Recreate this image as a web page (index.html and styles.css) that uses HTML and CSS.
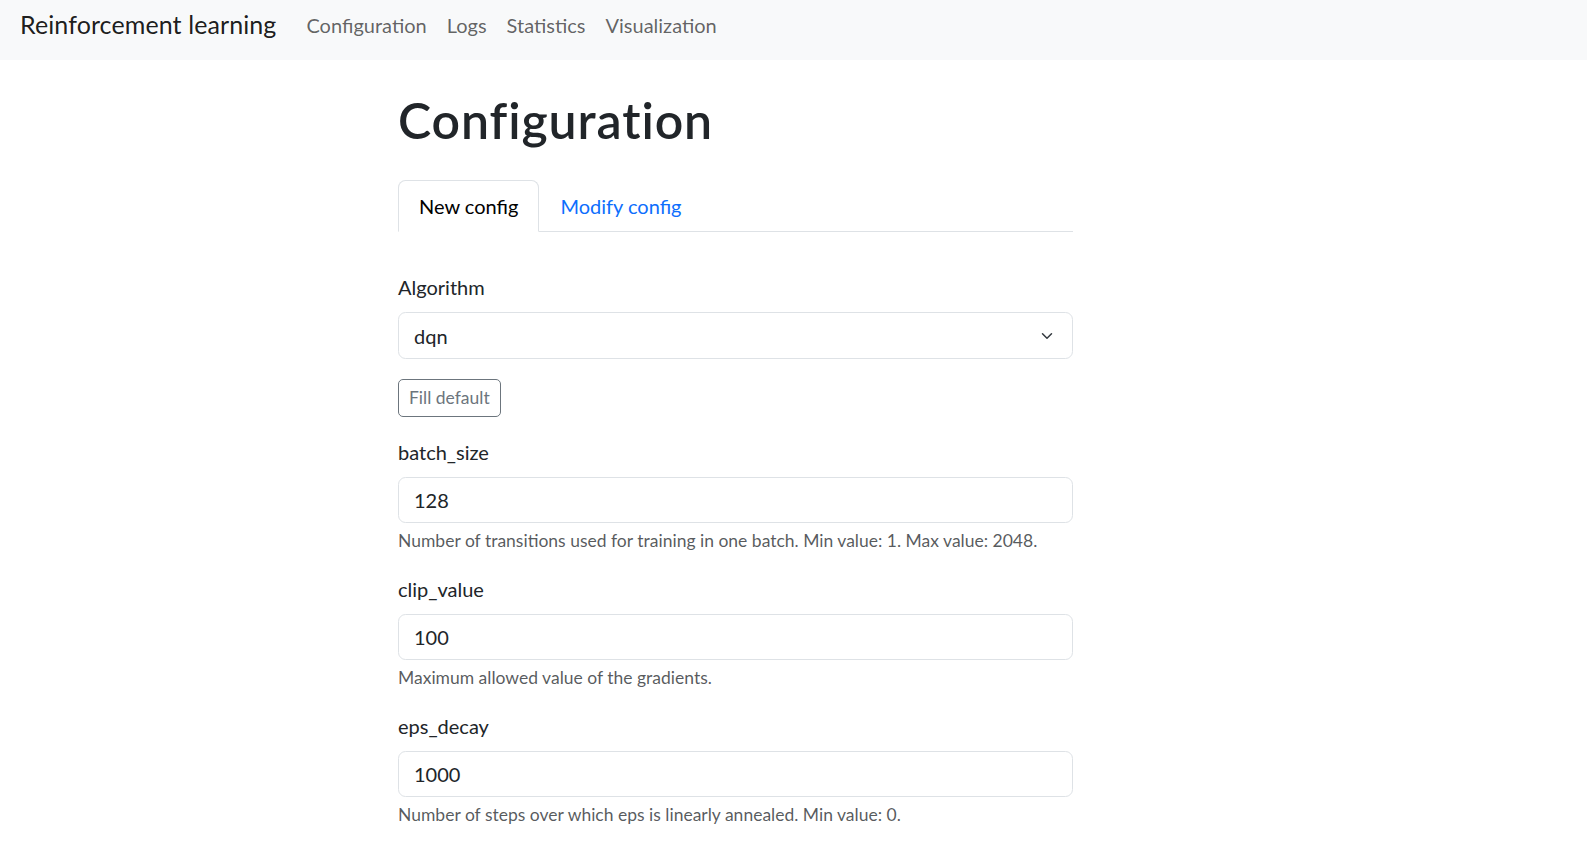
FILE: index.html
```html
<!DOCTYPE html>
<html lang="en">
<head>
<meta charset="utf-8">
<title>Reinforcement learning</title>
<link rel="stylesheet" href="styles.css">
</head>
<body>
<nav class="navbar">
  <a class="brand" href="#">Reinforcement learning</a>
  <ul class="nav-links">
    <li><a class="nav-link" href="#">Configuration</a></li>
    <li><a class="nav-link" href="#">Logs</a></li>
    <li><a class="nav-link" href="#">Statistics</a></li>
    <li><a class="nav-link" href="#">Visualization</a></li>
  </ul>
</nav>
<main class="main">
  <h1 class="title">Configuration</h1>
  <ul class="tabs">
    <li><a class="tab active" href="#">New config</a></li>
    <li><a class="tab" href="#">Modify config</a></li>
  </ul>
  <div class="tab-content">
    <div class="group">
      <label class="label">Algorithm</label>
      <div class="select">
        <span class="select-value">dqn</span>
        <svg class="chevron" width="16" height="12" viewBox="0 0 16 16"><path d="m2 5 6 6 6-6" fill="none" stroke="#343a40" stroke-width="2" stroke-linecap="round" stroke-linejoin="round"/></svg>
      </div>
    </div>
    <div class="group">
      <button class="btn" type="button">Fill default</button>
    </div>
    <div class="group">
      <label class="label">batch_size</label>
      <input class="control" type="text" value="128">
      <div class="help">Number of transitions used for training in one batch. Min value: 1. Max value: 2048.</div>
    </div>
    <div class="group">
      <label class="label">clip_value</label>
      <input class="control" type="text" value="100">
      <div class="help">Maximum allowed value of the gradients.</div>
    </div>
    <div class="group">
      <label class="label">eps_decay</label>
      <input class="control" type="text" value="1000">
      <div class="help">Number of steps over which eps is linearly annealed. Min value: 0.</div>
    </div>
  </div>
</main>
</body>
</html>
```

FILE: styles.css
```css
html {
  scrollbar-width: none;
}
html::-webkit-scrollbar {
  display: none;
}
body {
  margin: 0;
  font-family: Lato, "Liberation Sans", sans-serif;
  font-size: 20px;
  line-height: 1.5;
  color: #212529;
  background: #fff;
}
a {
  text-decoration: none;
}

.navbar {
  display: flex;
  align-items: flex-start;
  height: 60px;
  box-sizing: border-box;
  padding: 0 20px;
  background: #f8f9fa;
}
.brand {
  font-size: 25px;
  line-height: 37.5px;
  padding: 6.25px 0;
  margin-right: 20px;
  letter-spacing: 0.1px;
  color: rgba(0, 0, 0, 0.9);
}
.nav-links {
  display: flex;
  list-style: none;
  margin: 0;
  padding: 0;
}
.nav-link {
  display: block;
  padding: 10px 10px;
  line-height: 30px;
  color: rgba(0, 0, 0, 0.62);
}

.main {
  width: 675px;
  margin-left: 398px;
  padding-top: 30px;
}
.title {
  margin: 0 0 30px;
  font-size: 50px;
  line-height: 60px;
  font-weight: 600;
  letter-spacing: 0.9px;
}
.tabs {
  display: flex;
  list-style: none;
  margin: 0;
  padding: 0;
  border-bottom: 1px solid #dee2e6;
}
.tab {
  display: block;
  padding: 10px 20px;
  line-height: 30px;
  margin-bottom: -1px;
  border: 1px solid transparent;
  border-radius: 7.5px 7.5px 0 0;
  color: #0d6efd;
}
.tab.active {
  color: #000;
  background: #fff;
  border-color: #dee2e6 #dee2e6 #fff;
}

.tab-content {
  padding-top: 40px;
}
.group {
  margin-bottom: 20px;
}
.label {
  display: block;
  margin-bottom: 10px;
  line-height: 30px;
}
.select,
.control {
  display: flex;
  align-items: center;
  width: 100%;
  box-sizing: border-box;
  height: 46px;
  padding: 7px 15px;
  border: 1px solid #dee2e6;
  border-radius: 7.5px;
  background: #fff;
  font-family: inherit;
  font-size: 20px;
  line-height: 30px;
  color: #212529;
}
.select {
  height: 47px;
}
.control {
  display: block;
  margin: 0;
  outline: none;
}
.select-value {
  flex: 1;
}
.chevron {
  flex: none;
  margin-right: 2px;
}
.help {
  margin-top: 5px;
  font-size: 17.5px;
  line-height: 26px;
  color: rgba(33, 37, 41, 0.75);
}
.btn {
  display: inline-block;
  margin: 0;
  padding: 5px 10px;
  font-family: inherit;
  font-size: 17.5px;
  line-height: 26px;
  color: #6c757d;
  background: transparent;
  border: 1px solid #6c757d;
  border-radius: 5px;
}
```
